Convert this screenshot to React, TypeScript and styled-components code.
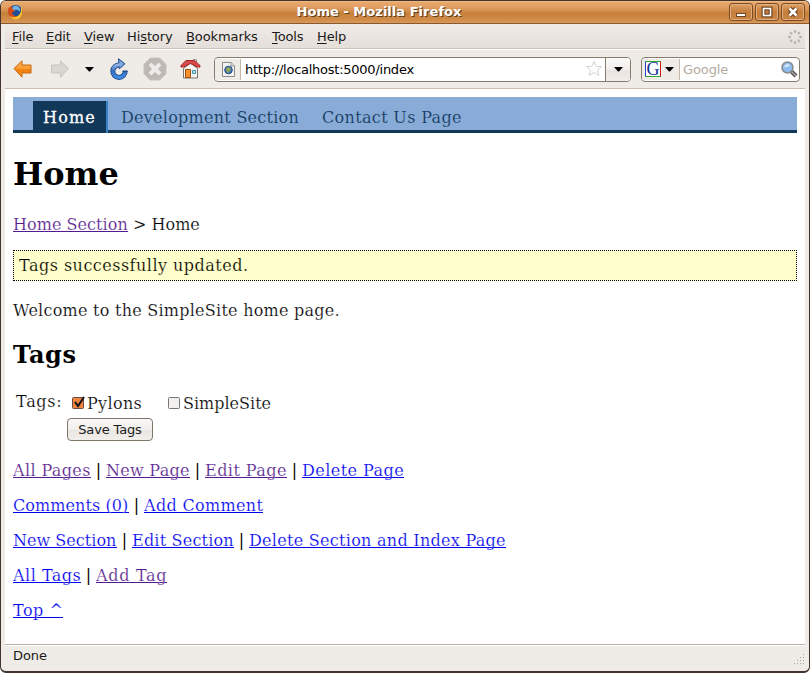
import React from "react";
import styled, { createGlobalStyle } from "styled-components";

const Global = createGlobalStyle`
  * { box-sizing: border-box; }
  body { margin: 0; background: #fff; overflow: hidden; }
`;

const Window = styled.div`
  width: 810px;
  height: 673px;
  display: flex;
  flex-direction: column;
  border: 1px solid #43342d;
  border-bottom-width: 2px;
  border-radius: 6px;
  background: #efebe7;
  overflow: hidden;
  font: 13px "DejaVu Sans", sans-serif;
  color: #1a1a1a;
`;

const TitleBar = styled.header`
  height: 23px;
  flex: none;
  display: grid;
  grid-template-columns: 20px 1fr 76px;
  align-items: center;
  padding: 0 4px 0 6px;
  background: linear-gradient(#e9ab70 0, #e2a064 25%, #d08b47 48%, #c67f38 55%, #d18c49 85%, #d8995c 100%);
  border-bottom: 1px solid #8a5a2e;
  box-shadow: inset 0 1px #eeb781;
`;

const Title = styled.h1`
  margin: 0;
  padding-left: 2px;
  text-align: center;
  color: #fff;
  font: bold 13px "DejaVu Sans", sans-serif;
  line-height: 20px;
  letter-spacing: 0.03px;
  text-shadow: 1px 1px 0 #5b3d22;
  white-space: nowrap;
`;

const WindowButtons = styled.div`
  display: flex;
  gap: 2px;
`;

const WindowButton = styled.button`
  width: 24px;
  height: 18px;
  padding: 0;
  border: 1px solid #7b4d25;
  border-radius: 3px;
  background: linear-gradient(#dfa26a, #c57e3b 50%, #c98645);
  box-shadow: inset 0 0 0 1px #e4ad7a;
  svg { display: block; }
`;

const Inner = styled.div`
  flex: 1;
  min-height: 0;
  margin: 0 4px;
  display: flex;
  flex-direction: column;
`;

const MenuBar = styled.nav`
  height: 25px;
  flex: none;
  display: flex;
  align-items: center;
  gap: 14px;
  padding: 1px 2px 0 7px;
  background: linear-gradient(#efebe7, #e4dfd9);
  border-bottom: 1px solid #cdc0b0;
`;

const MenuItem = styled.span<{ $w: number }>`
  width: ${(p) => p.$w}px;
  letter-spacing: -0.1px;
  white-space: nowrap;
  u { text-underline-offset: 2px; text-decoration-skip-ink: none; }
`;

const Throbber = styled.svg`
  margin-left: auto;
`;

const ToolBar = styled.div`
  height: 40px;
  flex: none;
  display: flex;
  align-items: center;
  padding: 0 5px 0 8px;
  border-top: 1px solid #fff;
  border-bottom: 1px solid #cbbfb2;
`;

const ToolIcon = styled.svg<{ $gap: number }>`
  flex: none;
  margin-right: ${(p) => p.$gap}px;
`;

const Field = styled.div<{ $w: number; $gap?: number }>`
  width: ${(p) => p.$w}px;
  height: 25px;
  margin-left: ${(p) => p.$gap ?? 0}px;
  flex: none;
  display: flex;
  align-items: stretch;
  border: 1px solid #857c6f;
  border-radius: 4px;
  background: #fff;
  overflow: hidden;
  svg { display: block; flex: none; }
`;

const FieldIcon = styled.div<{ $w: number; $pad: number; $gap?: number }>`
  width: ${(p) => p.$w}px;
  flex: none;
  margin: 1px 0;
  background: #efebe7;
  border-right: 1px solid #c3b8aa;
  display: flex;
  align-items: center;
  padding-left: ${(p) => p.$pad}px;
  gap: 4px;
`;

const FieldText = styled.span<{ $muted?: boolean }>`
  flex: 1;
  padding-left: ${(p) => (p.$muted ? 3 : 4)}px;
  line-height: 24px;
  letter-spacing: ${(p) => (p.$muted ? -0.1 : -0.25)}px;
  color: ${(p) => (p.$muted ? "#b5aaa0" : "#000")};
`;

const GoogleBox = styled.b`
  width: 16px;
  height: 16px;
  flex: none;
  border: 1px solid;
  border-color: #2faa2f #d01818 #2faa2f #2544c8;
  background: #fff;
  color: #12309a;
  font: 18px/14px "Liberation Serif", serif;
  text-align: center;
`;

const DropButton = styled.div`
  width: 25px;
  border-left: 1px solid #857c6f;
  background: linear-gradient(#fbfaf9, #f2efec 50%, #e9e4df 51%, #f0ece9);
  display: grid;
  place-items: center;
`;

const Page = styled.main`
  width: 800px;
  height: 555px;
  flex: none;
  padding: 8px;
  background: #fff;
  font: 16px "DejaVu Serif", serif;
  line-height: 19px;
  color: #000;
`;

/* A thin stroke in the background colour gives body text its light weight. */
const thin = (color: string) => `-webkit-text-stroke: 0.2px ${color};`;

const Tabs = styled.nav`
  height: 36px;
  display: flex;
  padding: 4px 0 0 20px;
  background: #88acd7;
  border-bottom: 3px solid #113759;
`;

const Tab = styled.a<{ $active?: boolean; $w: number; $ls: number }>`
  width: ${(p) => p.$w}px;
  height: 32px;
  padding-left: ${(p) => (p.$active ? 10 : 13)}px;
  line-height: 33px;
  letter-spacing: ${(p) => p.$ls}px;
  white-space: nowrap;
  color: ${(p) => (p.$active ? "#fff" : "#113759")};
  background: ${(p) => (p.$active ? "#113759" : "none")};
  border-right: ${(p) => (p.$active ? "2px solid #3783c8" : "none")};
  ${(p) => (p.$active ? "-webkit-text-stroke: 0.3px #fff;" : thin("#88acd7"))}
`;

const PageTitle = styled.h1`
  margin: 22px 0 0;
  font-size: 32px;
  line-height: 38px;
`;

const SectionTitle = styled.h2`
  margin: 20px 0 0;
  font-size: 24px;
  line-height: 29px;
  letter-spacing: 0.5px;
`;

const Paragraph = styled.p<{ $top?: number }>`
  margin: ${(p) => p.$top ?? 16}px 0 0;
  height: 19px;
  display: flex;
  white-space: pre;
`;

const Flash = styled.div`
  height: 31px;
  margin-top: 16px;
  padding: 5px;
  display: flex;
  border: 1px dotted #000;
  background: #ffffcc;
`;

const Run = styled.span<{ $w: number; $ls?: number; $bg?: string }>`
  width: ${(p) => p.$w}px;
  letter-spacing: ${(p) => p.$ls ?? 0}px;
  white-space: pre;
  ${(p) => thin(p.$bg ?? "#fff")}
`;

const PageLink = styled.a<{ $w: number; $visited?: boolean; $ls?: number }>`
  display: block;
  width: ${(p) => p.$w}px;
  height: 17px;
  letter-spacing: ${(p) => p.$ls ?? 0}px;
  color: ${(p) => (p.$visited ? "#551a8b" : "#0000ee")};
  border-bottom: 1px solid currentColor;
  ${thin("#fff")}
`;

const Bar = styled.span`
  width: 15px;
  text-align: center;
`;

const TagRow = styled.div`
  height: 22px;
  display: flex;
  align-items: flex-start;
  margin-top: 23px;
  padding-left: 3px;
`;

const Choice = styled.label<{ $w: number; $ls: number }>`
  width: ${(p) => p.$w}px;
  display: flex;
  gap: 1px;
  padding-top: 2px;
  letter-spacing: ${(p) => p.$ls}px;
  ${thin("#fff")}
  svg { flex: none; margin-top: 2px; }
`;

const SaveButton = styled.button`
  display: block;
  width: 86px;
  height: 23px;
  margin: 4px 0 0 54px;
  padding: 0;
  border: 1px solid #7e766b;
  border-radius: 4px;
  background: linear-gradient(#faf9f8, #f1eeeb 50%, #e9e5e1 51%, #f1eeeb);
  font: 13px "DejaVu Sans", sans-serif;
  letter-spacing: -0.15px;
  color: #1a1a1a;
`;

const StatusBar = styled.footer`
  flex: 1;
  display: flex;
  justify-content: space-between;
  align-items: flex-start;
  padding: 3px 0 0 8px;
  letter-spacing: -0.1px;
  border-top: 1px solid #b5b0aa;
  box-shadow: inset 0 1px #fff;
  svg { margin-top: 6px; }
`;

type LinkItem = { text: string; w: number; ls: number; visited?: boolean };

const LinkList = ({ items, top }: { items: LinkItem[]; top?: number }) => (
  <Paragraph $top={top}>
    {items.map(({ text, w, ls, visited }, i) => (
      <React.Fragment key={text}>
        {i > 0 && <Bar>|</Bar>}
        <PageLink $w={w} $ls={ls} $visited={visited}>{text}</PageLink>
      </React.Fragment>
    ))}
  </Paragraph>
);

const Caret = () => (
  <svg width="9" height="5"><path d="M0 0h9L5 4.5H4z" fill="#000" /></svg>
);

const FirefoxIcon = () => (
  <svg width="18" height="18" viewBox="0 0 18 18">
    <circle cx="8.5" cy="9" r="7" fill="#214f94" />
    <path d="M7 3c4-1 7 2 6 6 0 0-2-3-5-2S4 5 7 3z" fill="#74b3dd" />
    <path d="M1.5 5C0 11 3 16 8.500 16S16 12 15.500 7c-1 4-3 6-6 6-3 0-5-2-4-4l3-1-3-2-1-3z" fill="#d94c18" />
    <path d="M14 4c3 4 1 11-3 12-3 1-7 0-8-3 5 3 10 0 11-5z" fill="#f8c331" />
  </svg>
);

const tail = "M1 8.5L9 .8V5h9v8H9v4.2z";

const menus: [string, string, string, number][] = [
  ["", "F", "ile", 20], ["", "E", "dit", 24], ["", "V", "iew", 29], ["Hi", "s", "tory", 45],
  ["", "B", "ookmarks", 72], ["", "T", "ools", 31], ["", "H", "elp", 30],
];

export default function App() {
  return (
    <Window>
      <Global />
      <TitleBar>
        <FirefoxIcon />
        <Title>Home - Mozilla Firefox</Title>
        <WindowButtons>
          <WindowButton><svg width="22" height="16"><rect x="6.5" y="9.5" width="9" height="3" fill="#fff" stroke="#6e4522" /></svg></WindowButton>
          <WindowButton><svg width="22" height="16" fill="none"><rect x="7.5" y="4.5" width="7" height="7" stroke="#6e4522" strokeWidth="4" /><rect x="7.5" y="4.5" width="7" height="7" stroke="#fff" strokeWidth="1.6" /></svg></WindowButton>
          <WindowButton><svg width="22" height="16"><path d="M7.5 4.5l7 7m0-7l-7 7" stroke="#6e4522" strokeWidth="5" /><path d="M7.5 4.5l7 7m0-7l-7 7" stroke="#fff" strokeWidth="2.6" /></svg></WindowButton>
        </WindowButtons>
      </TitleBar>
      <Inner>
        <MenuBar>
          {menus.map(([a, k, b, w]) => <MenuItem key={k + b} $w={w}>{a}<u>{k}</u>{b}</MenuItem>)}
          <Throbber width="16" height="16" viewBox="-8 -8 16 16" fill="#bbb6b0">
            {[0, 45, 90, 135, 180, 225, 270, 315].map((r) => <rect key={r} x="-1.2" y="-7" width="2.4" height="3" rx="1" transform={`rotate(${r})`} />)}
          </Throbber>
        </MenuBar>
        <ToolBar>
          <ToolIcon $gap={17} width="20" height="18" viewBox="0 0 20 18">
            <defs>
              <linearGradient id="orange" x2="0" y2="1"><stop stopColor="#fdb45e" /><stop offset=".5" stopColor="#fa9a2c" /><stop offset=".55" stopColor="#ee7c0a" /><stop offset="1" stopColor="#f99b35" /></linearGradient>
              <linearGradient id="blue" x2="0" y2="1"><stop stopColor="#8fb3e4" /><stop offset=".5" stopColor="#376fc0" /><stop offset="1" stopColor="#3d89e4" /></linearGradient>
            </defs>
            <path d={tail} fill="url(#orange)" stroke="#c9670b" strokeLinejoin="round" />
          </ToolIcon>
          <ToolIcon $gap={15} width="20" height="18" viewBox="0 0 20 18">
            <path d={tail} transform="translate(19.5)scale(-1 1)" fill="#d9d5d1" stroke="#c8c3be" strokeLinejoin="round" />
          </ToolIcon>
          <ToolIcon $gap={15} width="9" height="5"><path d="M0 0h9L5 4.5H4z" /></ToolIcon>
          <ToolIcon $gap={14} width="20" height="22" viewBox="0 0 20 22">
            <path d="M10.500 7A6.200 6.200 0 1 0 16.200 13" fill="none" stroke="#1c4685" strokeWidth="5" />
            <path d="M9.500 .8l6.500 5-5.600 5z" fill="#7da7e0" stroke="#1c4685" />
            <path d="M11 7A6.200 6.200 0 1 0 16.200 13.600" fill="none" stroke="url(#blue)" strokeWidth="3.400" />
            <path d="M13.500 13h5.200" stroke="#1c4685" />
          </ToolIcon>
          <ToolIcon $gap={13} width="24" height="24" viewBox="0 0 24 24">
            <path d="M7.3 1h9.4L23 7.3v9.4L16.7 23H7.3L1 16.7V7.3z" fill="#bfb8b5" stroke="#c7c1be" />
            <path d="M7 7l10 10M17 7L7 17" stroke="#eeebea" strokeWidth="4" />
          </ToolIcon>
          <ToolIcon $gap={13} width="21" height="22" viewBox="0 0 21 22">
            <path d="M13.5 1.5h3v7h-3z" fill="#eee" stroke="#999" />
            <path d="M3.5 10.500L10.500 5l7 5.500v9.500H3.500z" fill="#f3f2f0" stroke="#77736f" />
            <path d="M1 9V7.500L6 2.500h8.500l5.500 5V9h-2.500L10.500 5.500 3.500 9z" fill="#d34b4b" stroke="#a82424" />
            <path d="M5.500 11.500h5v8h-5z" fill="#f78e2d" stroke="#9c520f" />
            <path d="M12.500 12.500h3v3h-3z" fill="#a6e3f5" stroke="#4a93a8" />
          </ToolIcon>
          <Field $w={417}>
            <FieldIcon $w={26} $pad={6}>
              <svg width="15" height="17"><path d="M1.500 1.500h9l3 3v11h-12z" fill="#f4f4f4" stroke="#8b8b8b" /><path d="M10 1v4h4" fill="#ddd" stroke="#999" /><circle cx="7.500" cy="9" r="3.800" fill="#4c78b8" stroke="#244b85" /><path d="M5 7l3-1 2 2-2 3-2 1z" fill="#8ea94f" /></svg>
            </FieldIcon>
            <FieldText>http://localhost:5000/index</FieldText>
            <svg width="20" height="23" viewBox="0 0 20 23"><path d="M9 3.500l2.300 5h5.200l-4 3.700 1.400 5.300L9 14.500l-4.900 3 1.400-5.300-4-3.700h5.200z" fill="#fff" stroke="#d6d2ce" /></svg>
            <DropButton><Caret /></DropButton>
          </Field>
          <Field $w={159} $gap={10}>
            <FieldIcon $w={38} $pad={3}>
              <GoogleBox>G</GoogleBox>
              <Caret />
            </FieldIcon>
            <FieldText $muted>Google</FieldText>
            <svg width="20" height="23" viewBox="0 0 20 23"><path d="M12 13l5 5" stroke="#55524e" strokeWidth="4" /><path d="M12 13l5 5" stroke="#aaa" strokeWidth="1.500" /><circle cx="8.500" cy="9.500" r="5.500" fill="#8fbcec" stroke="#8a8a8a" strokeWidth="1.500" /><path d="M5 9c1-3 4-4 6-2-1 1-3 3-6 2z" fill="#d3e6fa" /></svg>
          </Field>
        </ToolBar>
        <Page>
          <Tabs>
            <Tab $active $w={75} $ls={1.2}>Home</Tab>
            <Tab $w={201} $ls={0.26}>Development Section</Tab>
            <Tab $w={180} $ls={0.34}>Contact Us Page</Tab>
          </Tabs>
          <PageTitle>Home</PageTitle>
          <Paragraph $top={22}>
            <PageLink $w={115} $visited $ls={0.05}>Home Section</PageLink>
            <Run $w={100}>{" > Home"}</Run>
          </Paragraph>
          <Flash><Run $w={300} $ls={0.48} $bg="#ffffcc">Tags successfully updated.</Run></Flash>
          <Paragraph $top={20}><Run $w={400} $ls={0.25}>Welcome to the SimpleSite home page.</Run></Paragraph>
          <SectionTitle>Tags</SectionTitle>
          <TagRow>
            <Run $w={56} $ls={0.7}>Tags:</Run>
            <Choice $w={96} $ls={0.35}>
              <svg width="14" height="14"><rect x=".5" y="1.500" width="11" height="11" rx="1" fill="#ef8443" stroke="#6d4f3d" /><path d="M3 6l3 4 6-9" fill="none" stroke="#111" strokeWidth="2" /></svg>
              Pylons
            </Choice>
            <Choice $w={120} $ls={0}>
              <svg width="14" height="14"><rect x=".5" y="1.500" width="11" height="11" rx="1" fill="#f1f0ef" stroke="#777" /></svg>
              SimpleSite
            </Choice>
          </TagRow>
          <SaveButton>Save Tags</SaveButton>
          <LinkList top={20} items={[
            { text: "All Pages", w: 78, ls: 0.38, visited: true },
            { text: "New Page", w: 84, ls: 0.28, visited: true },
            { text: "Edit Page", w: 82, ls: 0.45, visited: true },
            { text: "Delete Page", w: 102, ls: 0.45 },
          ]} />
          <LinkList items={[{ text: "Comments (0)", w: 116, ls: 0.08 }, { text: "Add Comment", w: 119, ls: 0.34 }]} />
          <LinkList items={[
            { text: "New Section", w: 104, ls: 0.03 },
            { text: "Edit Section", w: 102, ls: 0.2 },
            { text: "Delete Section and Index Page", w: 257, ls: 0.28 },
          ]} />
          <LinkList items={[{ text: "All Tags", w: 68, ls: 0.5 }, { text: "Add Tag", w: 71, ls: 0.7, visited: true }]} />
          <LinkList items={[{ text: "Top ^", w: 50, ls: 0.5 }]} />
        </Page>
        <StatusBar>
          Done
          <svg width="11" height="11" fill="#aaa39b">
            {[0, 1, 2, 3].flatMap((r) => Array.from({ length: r + 1 }, (_, c) => <rect key={`${r}${c}`} x={9 - c * 3} y={r * 3} width="1" height="1" />))}
          </svg>
        </StatusBar>
      </Inner>
    </Window>
  );
}
